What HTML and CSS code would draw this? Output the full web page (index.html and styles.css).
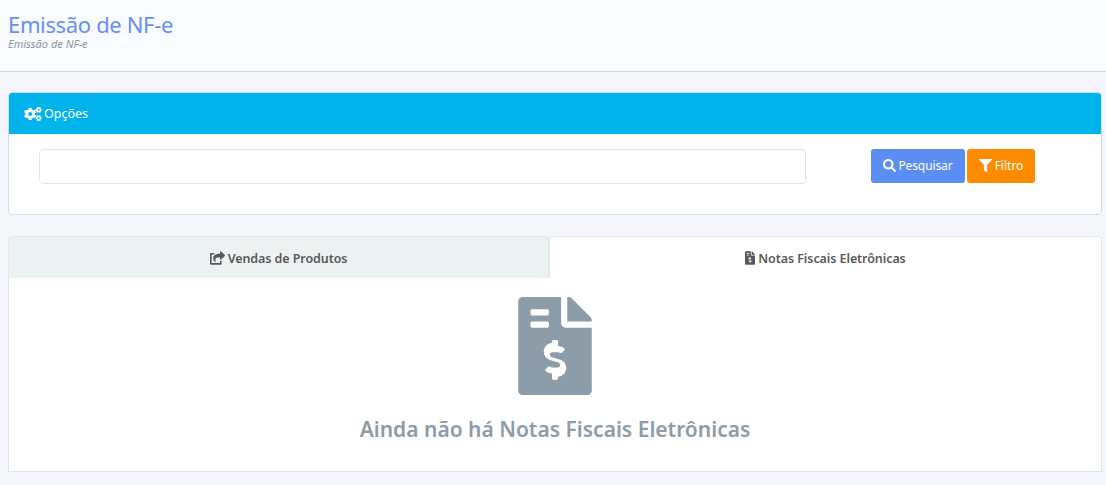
FILE: index.html
```html
<!DOCTYPE html>
<html lang="pt-BR">
  <head>
    <meta charset="UTF-8" />
    <meta name="viewport" content="width=device-width, initial-scale=1.0" />
    <title>Emissão de NF-e</title>
    <link rel="stylesheet" href="styles.css">
  </head>
  <body>
    <header class="page-header">
      <h1 class="page-title">Emissão de NF-e</h1>
      <small class="page-subtitle">Emissão de NF-e</small>
    </header>

    <main class="content">
      <section class="card">
        <div class="card-header">
          <svg class="icon icon-cogs" viewBox="0 0 640 512"><path d="M512.1 191l-8.2 14.3c-3 5.3-9.4 7.5-15.1 5.4-11.8-4.4-22.6-10.7-32.1-18.6-4.6-3.8-5.8-10.5-2.8-15.7l8.2-14.3c-6.9-8-12.3-17.3-15.9-27.4h-16.5c-6 0-11.2-4.3-12.2-10.3-2-12-2.1-24.6 0-37.1 1-6 6.2-10.4 12.2-10.4h16.5c3.6-10.1 9-19.4 15.9-27.4l-8.2-14.3c-3-5.2-1.9-11.9 2.8-15.7 9.5-7.9 20.4-14.2 32.1-18.6 5.7-2.1 12.1.1 15.1 5.4l8.2 14.3c10.5-1.9 21.2-1.9 31.7 0L552 6.3c3-5.3 9.4-7.5 15.1-5.4 11.8 4.4 22.6 10.7 32.1 18.6 4.6 3.8 5.8 10.5 2.8 15.7l-8.2 14.3c6.9 8 12.3 17.3 15.9 27.4h16.5c6 0 11.2 4.3 12.2 10.3 2 12 2.1 24.6 0 37.1-1 6-6.2 10.4-12.2 10.4h-16.5c-3.6 10.1-9 19.4-15.9 27.4l8.2 14.3c3 5.2 1.9 11.9-2.8 15.7-9.5 7.9-20.4 14.2-32.1 18.6-5.7 2.1-12.1-.1-15.1-5.4l-8.2-14.3c-10.4 1.9-21.2 1.9-31.7 0zm-10.5-58.8c38.5 29.6 82.4-14.3 52.8-52.8-38.5-29.7-82.4 14.3-52.8 52.8zM386.3 286.1l33.7 16.8c10.1 5.8 14.5 18.1 10.5 29.1-8.9 24.2-26.4 46.4-42.6 65.8-7.4 8.9-20.2 11.1-30.3 5.3l-29.1-16.8c-16 13.7-34.6 24.6-54.9 31.7v33.6c0 11.6-8.3 21.6-19.7 23.6-24.6 4.2-50.4 4.4-75.9 0-11.5-2-20-11.9-20-23.6V418c-20.3-7.2-38.9-18-54.9-31.7L74 403c-10 5.8-22.9 3.6-30.3-5.3-16.2-19.4-33.3-41.6-42.2-65.7-4-10.9.4-23.2 10.5-29.1l33.3-16.8c-3.9-20.9-3.9-42.4 0-63.4L12 205.8c-10.1-5.8-14.6-18.1-10.5-29 8.9-24.2 26-46.4 42.2-65.8 7.4-8.9 20.2-11.1 30.3-5.3l29.1 16.8c16-13.7 34.6-24.6 54.9-31.7V57.1c0-11.5 8.2-21.5 19.6-23.5 24.6-4.2 50.5-4.4 76-.1 11.5 2 20 11.9 20 23.6v33.6c20.3 7.2 38.9 18 54.9 31.7l29.1-16.8c10-5.8 22.9-3.6 30.3 5.3 16.2 19.4 33.2 41.6 42.1 65.8 4 10.9.1 23.2-10 29.1l-33.7 16.8c3.9 21 3.9 42.5 0 63.5zm-117.6 21.1c59.2-77-28.7-164.9-105.7-105.7-59.2 77 28.7 164.9 105.7 105.7zm243.4 182.7l-8.2 14.3c-3 5.3-9.4 7.5-15.1 5.4-11.8-4.4-22.6-10.7-32.1-18.6-4.6-3.8-5.8-10.5-2.8-15.7l8.2-14.3c-6.9-8-12.3-17.3-15.9-27.4h-16.5c-6 0-11.2-4.3-12.2-10.3-2-12-2.1-24.6 0-37.1 1-6 6.2-10.4 12.2-10.4h16.5c3.6-10.1 9-19.4 15.9-27.4l-8.2-14.3c-3-5.2-1.9-11.9 2.8-15.7 9.5-7.9 20.4-14.2 32.1-18.6 5.7-2.1 12.1.1 15.1 5.4l8.2 14.3c10.5-1.9 21.2-1.9 31.7 0l8.2-14.3c3-5.3 9.4-7.5 15.1-5.4 11.8 4.4 22.6 10.7 32.1 18.6 4.6 3.8 5.8 10.5 2.8 15.7l-8.2 14.3c6.9 8 12.3 17.3 15.9 27.4h16.5c6 0 11.2 4.3 12.2 10.3 2 12 2.1 24.6 0 37.1-1 6-6.2 10.4-12.2 10.4h-16.5c-3.6 10.1-9 19.4-15.9 27.4l8.2 14.3c3 5.2 1.9 11.9-2.8 15.7-9.5 7.9-20.4 14.2-32.1 18.6-5.7 2.1-12.1-.1-15.1-5.4l-8.2-14.3c-10.4 1.9-21.2 1.9-31.7 0zM501.6 431c38.5 29.6 82.4-14.3 52.8-52.8-38.5-29.6-82.4 14.3-52.8 52.8z"/></svg>
          <span>Opções</span>
        </div>
        <div class="card-body">
          <input class="search-input" type="text" />
          <div class="search-actions">
            <button class="btn btn-search" type="button">
              <svg class="icon" viewBox="0 0 512 512"><path d="M505 442.7L405.3 343c-4.5-4.5-10.6-7-17-7H372c27.6-35.3 44-79.7 44-128C416 93.1 322.9 0 208 0S0 93.1 0 208s93.1 208 208 208c48.3 0 92.7-16.4 128-44v16.3c0 6.4 2.5 12.5 7 17l99.7 99.7c9.4 9.4 24.6 9.4 33.9 0l28.3-28.3c9.4-9.4 9.4-24.6.1-34zM208 336c-70.7 0-128-57.2-128-128 0-70.7 57.2-128 128-128 70.7 0 128 57.2 128 128 0 70.7-57.2 128-128 128z"/></svg>
              Pesquisar
            </button>
            <button class="btn btn-filter" type="button">
              <svg class="icon" viewBox="0 0 512 512"><path d="M487.976 0H24.028C2.71 0-8.047 25.866 7.058 40.971L192 225.941V432c0 7.831 3.821 15.17 10.237 19.662l80 55.98C298.02 518.69 320 507.493 320 487.98V225.941l184.947-184.97C520.021 25.896 509.338 0 487.976 0z"/></svg>
              Filtro
            </button>
          </div>
        </div>
      </section>

      <nav class="tabs">
        <a class="tab">
          <svg class="icon icon-share" viewBox="0 0 576 512"><path d="M568.482 177.448L424.479 313.433C409.3 327.768 384 317.14 384 295.985v-71.963c-144.575.97-205.566 35.113-164.775 171.353 4.483 14.973-12.846 26.567-25.006 17.33C155.252 383.105 120 326.488 120 269.339c0-143.937 117.599-172.5 264-173.312V24.012c0-21.174 25.317-31.768 40.479-17.448l144.003 135.988c10.02 9.463 10.028 25.425 0 34.896zM384 379.128V448H64V128h50.916a11.99 11.99 0 0 0 8.648-3.693c14.953-15.568 32.237-27.89 51.014-37.676C185.708 80.83 181.584 64 169.033 64H48C21.49 64 0 85.49 0 112v352c0 26.51 21.49 48 48 48h352c26.51 0 48-21.49 48-48v-88.806c0-8.288-8.197-14.066-16.011-11.302a71.83 71.83 0 0 1-34.189 3.377c-7.27-1.046-13.8 4.514-13.8 11.859z"/></svg>
          Vendas de Produtos
        </a>
        <a class="tab active">
          <svg class="icon icon-invoice" viewBox="0 0 384 512"><path d="M377 105L279.1 7c-4.5-4.5-10.6-7-17-7H256v128h128v-6.1c0-6.3-2.5-12.4-7-16.9zm-153 31V0H24C10.7 0 0 10.7 0 24v464c0 13.3 10.7 24 24 24h336c13.3 0 24-10.7 24-24V160H248c-13.2 0-24-10.8-24-24zM64 72c0-4.42 3.58-8 8-8h80c4.42 0 8 3.58 8 8v16c0 4.42-3.58 8-8 8H72c-4.42 0-8-3.58-8-8V72zm0 64c0-4.42 3.58-8 8-8h80c4.42 0 8 3.58 8 8v16c0 4.42-3.58 8-8 8H72c-4.42 0-8-3.58-8-8v-16zm144 263.88V424c0 4.42-3.58 8-8 8h-16c-4.42 0-8-3.58-8-8v-24.29c-11.29-.58-22.27-4.52-31.37-11.35-3.9-2.93-4.1-8.77-.57-12.14l11.75-11.21c2.77-2.64 6.89-2.76 10.13-.73 3.87 2.42 8.26 3.72 12.82 3.72h28.11c6.5 0 11.8-5.92 11.8-13.19 0-5.95-3.61-11.19-8.77-12.73l-45-13.5c-18.59-5.58-31.58-23.42-31.58-43.39 0-24.52 19.05-44.44 42.67-45.07V232c0-4.42 3.58-8 8-8h16c4.42 0 8 3.58 8 8v24.29c11.29.58 22.27 4.51 31.37 11.35 3.9 2.93 4.1 8.77.57 12.14l-11.75 11.21c-2.77 2.64-6.89 2.76-10.13.73-3.87-2.43-8.26-3.72-12.82-3.72h-28.11c-6.5 0-11.8 5.92-11.8 13.19 0 5.95 3.61 11.19 8.77 12.73l45 13.5c18.59 5.58 31.58 23.42 31.58 43.39 0 24.53-19.05 44.44-42.67 45.07z"/></svg>
          Notas Fiscais Eletrônicas
        </a>
      </nav>

      <section class="tab-panel">
        <svg class="empty-icon" viewBox="0 0 384 512"><path d="M377 105L279.1 7c-4.5-4.5-10.6-7-17-7H256v128h128v-6.1c0-6.3-2.5-12.4-7-16.9zm-153 31V0H24C10.7 0 0 10.7 0 24v464c0 13.3 10.7 24 24 24h336c13.3 0 24-10.7 24-24V160H248c-13.2 0-24-10.8-24-24zM64 72c0-4.42 3.58-8 8-8h80c4.42 0 8 3.58 8 8v16c0 4.42-3.58 8-8 8H72c-4.42 0-8-3.58-8-8V72zm0 64c0-4.42 3.58-8 8-8h80c4.42 0 8 3.58 8 8v16c0 4.42-3.58 8-8 8H72c-4.42 0-8-3.58-8-8v-16zm144 263.88V424c0 4.42-3.58 8-8 8h-16c-4.42 0-8-3.58-8-8v-24.29c-11.29-.58-22.27-4.52-31.37-11.35-3.9-2.93-4.1-8.77-.57-12.14l11.75-11.21c2.77-2.64 6.89-2.76 10.13-.73 3.87 2.42 8.26 3.72 12.82 3.72h28.11c6.5 0 11.8-5.92 11.8-13.19 0-5.95-3.61-11.19-8.77-12.73l-45-13.5c-18.59-5.58-31.58-23.42-31.58-43.39 0-24.52 19.05-44.44 42.67-45.07V232c0-4.42 3.58-8 8-8h16c4.42 0 8 3.58 8 8v24.29c11.29.58 22.27 4.51 31.37 11.35 3.9 2.93 4.1 8.77.57 12.14l-11.75 11.21c-2.77 2.64-6.89 2.76-10.13.73-3.87-2.43-8.26-3.72-12.82-3.72h-28.11c-6.5 0-11.8 5.92-11.8 13.19 0 5.95 3.61 11.19 8.77 12.73l45 13.5c18.59 5.58 31.58 23.42 31.58 43.39 0 24.53-19.05 44.44-42.67 45.07z"/></svg>
        <h2 class="empty-title">Ainda não há Notas Fiscais Eletrônicas</h2>
      </section>
    </main>
  </body>
</html>
```

FILE: styles.css
```css
* {
  box-sizing: border-box;
  margin: 0;
  padding: 0;
}

body {
  background-color: #f4f6fb;
  font-family: "Noto Sans", "Open Sans", sans-serif;
  color: #58595b;
}

.icon {
  width: 13px;
  height: 13px;
  fill: currentColor;
  flex: none;
}

.page-header {
  height: 72px;
  padding-top: 11px;
  background-color: #fafbfe;
  border-bottom: 1px solid #d2d6de;
}

.page-title {
  margin-left: 8px;
  font-size: 22px;
  line-height: 26px;
  font-weight: 400;
  letter-spacing: -0.35px;
  color: #6690f4;
}

.page-subtitle {
  display: block;
  margin-left: 8px;
  font-size: 11px;
  line-height: 14px;
  font-style: italic;
  color: #8a969c;
}

.content {
  padding: 20px 4px 0 8px;
}

.card {
  height: 123px;
  background-color: #fff;
  border: 1px solid #d3dfe8;
  border-radius: 4px;
  overflow: hidden;
}

.card-header {
  display: flex;
  align-items: center;
  gap: 2px;
  height: 41px;
  padding-left: 15px;
  background-color: #00b4eb;
  color: #fff;
  font-size: 12.5px;
}

.icon-cogs {
  width: 18px;
  height: 14px;
}

.card-body {
  display: flex;
  padding: 15px 0 0 30px;
}

.search-input {
  width: 767px;
  height: 35px;
  background-color: #fff;
  border: 1px solid #e1e5ea;
  border-radius: 4px;
}

.search-actions {
  display: flex;
  gap: 2px;
  margin-left: 65px;
}

.btn {
  display: flex;
  align-items: center;
  justify-content: center;
  gap: 3px;
  height: 34px;
  padding-bottom: 2px;
  border: none;
  border-radius: 3px;
  color: #fff;
  font-family: inherit;
  font-size: 12px;
}

.btn-search {
  width: 94px;
  gap: 2px;
  letter-spacing: -0.1px;
  background-color: #5c8df2;
}

.btn-filter {
  width: 68px;
  background-color: #ff8c00;
}

.tabs {
  display: flex;
  margin-top: 21px;
}

.tab {
  display: flex;
  align-items: center;
  justify-content: center;
  gap: 3px;
  width: 541px;
  height: 42px;
  padding-top: 1px;
  background-color: #ecf1f2;
  border: 1px solid #e3e9ea;
  border-bottom: none;
  border-radius: 4px 4px 0 0;
  font-size: 12.5px;
  font-weight: 600;
  letter-spacing: -0.08px;
}

.tab.active {
  flex: 1;
  background-color: #fff;
}

.icon-share {
  width: 15px;
  height: 14px;
}

.icon-invoice {
  width: 10px;
  height: 14px;
}

.tab-panel {
  display: flex;
  flex-direction: column;
  align-items: center;
  height: 194px;
  padding-top: 19px;
  background-color: #fff;
  border: 1px solid #dde6e6;
  border-top: none;
}

.empty-icon {
  width: 74px;
  height: 98px;
  fill: #8c9ca8;
}

.empty-title {
  margin-top: 19px;
  font-size: 21px;
  line-height: 30px;
  font-weight: 600;
  color: #8c9ca8;
}
```
